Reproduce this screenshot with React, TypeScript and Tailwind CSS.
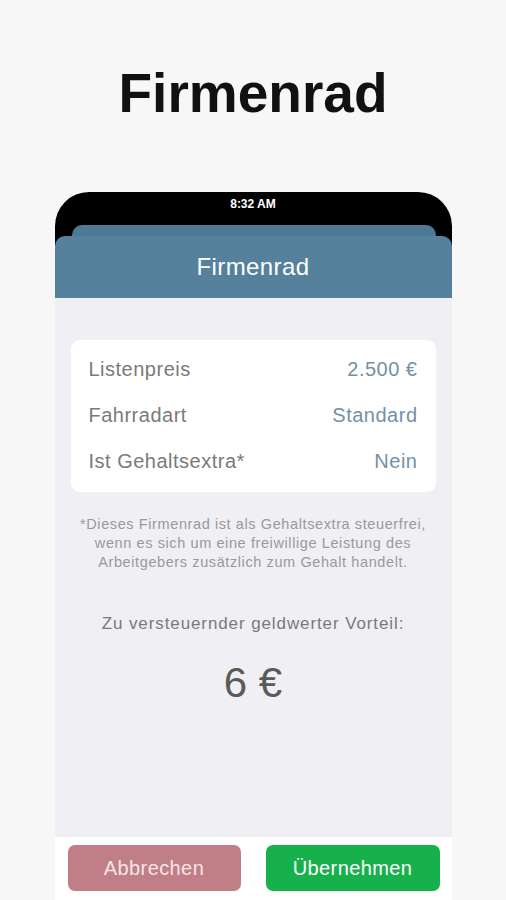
import React from "react";

const rows = [
    { label: "Listenpreis", value: "2.500 €" },
    { label: "Fahrradart", value: "Standard" },
    { label: "Ist Gehaltsextra*", value: "Nein" },
];

function PhonePreview() {
    return (
        <div className="mx-auto w-[397px] flex-1 flex flex-col bg-black rounded-t-[34px] overflow-hidden">
            <div className="h-[24px] flex items-center justify-center text-white text-[12px] font-bold">
                8:32 AM
            </div>
            <div className="mt-[9px] ml-[17px] mr-[16px] h-[11px] rounded-t-[10px] bg-[#4d7994]" />
            <div className="h-[62px] rounded-t-[10px] bg-[#55819d] flex items-center justify-center text-white text-[24px] tracking-[0.4px]">
                Firmenrad
            </div>
            <div className="flex-1 bg-[#efeff4] flex flex-col">
                <div className="mt-[42px] mx-[16px] bg-white rounded-[9px] px-[18px] pt-[6px] pb-[8px]">
                    {rows.map((row) => (
                        <div
                            key={row.label}
                            className="h-[46px] flex items-center justify-between text-[20px] tracking-[0.5px]"
                        >
                            <span className="text-[#7a7a7a]">{row.label}</span>
                            <span className="text-[#7391a5]">{row.value}</span>
                        </div>
                    ))}
                </div>
                <p className="mt-[23px] px-[10px] text-center text-[14.5px] leading-[19px] tracking-[0.6px] text-[#9a9a9a]">
                    *Dieses Firmenrad ist als Gehaltsextra steuerfrei,
                    <br />
                    wenn es sich um eine freiwillige Leistung des
                    <br />
                    Arbeitgebers zusätzlich zum Gehalt handelt.
                </p>
                <p className="mt-[41px] text-center text-[17px] leading-[22px] tracking-[0.9px] text-[#7a7a7a]">
                    Zu versteuernder geldwerter Vorteil:
                </p>
                <p className="mt-[24px] text-center text-[42px] leading-[48px] text-[#5a5a5a]">
                    6 €
                </p>
            </div>
            <div className="h-[63px] bg-white flex gap-[25px] pt-[8px] pl-[13px] pr-[12px]">
                <button className="w-[173px] h-[46px] rounded-[7px] bg-[#c07e87] text-[#f6e4e6] text-[20px] tracking-[0.4px]">
                    Abbrechen
                </button>
                <button className="w-[174px] h-[46px] rounded-[7px] bg-[#17b14b] text-white text-[20px] tracking-[0.4px]">
                    Übernehmen
                </button>
            </div>
        </div>
    );
}

export default function App() {
    return (
        <div
            className="h-[900px] overflow-hidden bg-[#f7f7f7] flex flex-col"
            style={{ fontFamily: '"Liberation Sans", Arial, sans-serif' }}
        >
            <h1 className="pt-[61px] text-center text-[55px] leading-[64px] font-bold text-[#111]">
                Firmenrad
            </h1>
            <div className="mt-[67px] flex-1 flex flex-col">
                <PhonePreview />
            </div>
        </div>
    );
}
